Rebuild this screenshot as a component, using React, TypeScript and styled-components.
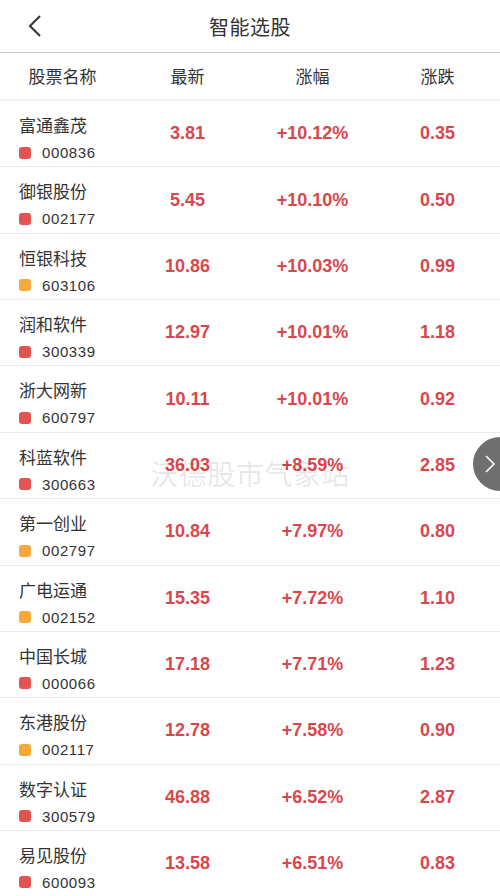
import { FunctionComponent } from "react";
import styled, { createGlobalStyle } from "styled-components";

const GlobalStyle = createGlobalStyle`
  body {
    margin: 0;
    background: #fff;
    font-family: "Noto Sans CJK SC", "Noto Sans", sans-serif;
    color: #333;
  }
`;

type Stock = {
    name: string;
    code: string;
    price: string;
    pct: string;
    change: string;
    level: "red" | "orange";
};

const stocks: Stock[] = [
    {name: "富通鑫茂", code: "000836", price: "3.81", pct: "+10.12%", change: "0.35", level: "red"},
    {name: "御银股份", code: "002177", price: "5.45", pct: "+10.10%", change: "0.50", level: "red"},
    {name: "恒银科技", code: "603106", price: "10.86", pct: "+10.03%", change: "0.99", level: "orange"},
    {name: "润和软件", code: "300339", price: "12.97", pct: "+10.01%", change: "1.18", level: "red"},
    {name: "浙大网新", code: "600797", price: "10.11", pct: "+10.01%", change: "0.92", level: "red"},
    {name: "科蓝软件", code: "300663", price: "36.03", pct: "+8.59%", change: "2.85", level: "red"},
    {name: "第一创业", code: "002797", price: "10.84", pct: "+7.97%", change: "0.80", level: "orange"},
    {name: "广电运通", code: "002152", price: "15.35", pct: "+7.72%", change: "1.10", level: "orange"},
    {name: "中国长城", code: "000066", price: "17.18", pct: "+7.71%", change: "1.23", level: "red"},
    {name: "东港股份", code: "002117", price: "12.78", pct: "+7.58%", change: "0.90", level: "orange"},
    {name: "数字认证", code: "300579", price: "46.88", pct: "+6.52%", change: "2.87", level: "red"},
    {name: "易见股份", code: "600093", price: "13.58", pct: "+6.51%", change: "0.83", level: "red"},
];

const Page = styled.div`
  position: relative;
  width: 500px;
  height: 896px;
  overflow: hidden;
  background: #fff;
`;

const NavBar = styled.div`
  position: relative;
  height: 53px;
  display: flex;
  align-items: center;
  justify-content: center;
  border-bottom: 1px solid #c9c9c9;
  box-sizing: border-box;
`;

const BackButton = styled.div`
  position: absolute;
  left: 26px;
  top: 14px;
  width: 18px;
  height: 24px;
  display: flex;
`;

const Title = styled.div`
  font-size: 20px;
  color: #333;
  letter-spacing: 0.5px;
`;

const Grid = styled.div`
  display: grid;
  grid-template-columns: repeat(4, 1fr);
  align-items: center;
  box-sizing: border-box;
`;

const HeaderRow = styled(Grid)`
  height: 48px;
  border-bottom: 2px solid #efefef;
`;

const HeadCell = styled.div`
  text-align: center;
  font-size: 17px;
  color: #333;
  padding-bottom: 1px;
`;

const Row = styled(Grid)`
  height: 66.36px;
  border-bottom: 1px solid #ececec;
`;

const NameCell = styled.div`
  align-self: start;
  padding: 12px 0 0 19px;
  display: flex;
  flex-direction: column;
  gap: 7px;
`;

const Name = styled.div`
  font-size: 17px;
  line-height: 24px;
  color: #333;
  white-space: nowrap;
`;

const CodeLine = styled.div`
  display: flex;
  align-items: center;
  gap: 11px;
  height: 17px;
`;

const Dot = styled.span<{ $level: "red" | "orange" }>`
  width: 12px;
  height: 12px;
  border-radius: 3px;
  background: ${p => p.$level === "red" ? "#e35352" : "#f7a83a"};
`;

const Code = styled.span`
  font-family: "Liberation Sans", "Noto Sans", sans-serif;
  font-size: 15px;
  color: #333;
  letter-spacing: 0.6px;
`;

const Num = styled.div`
  text-align: center;
  font-family: "Liberation Sans", "Noto Sans", sans-serif;
  font-weight: bold;
  font-size: 18px;
  color: #d9474d;
`;

const Watermark = styled.div`
  position: absolute;
  left: 0;
  right: 0;
  top: 453px;
  text-align: center;
  font-size: 28px;
  color: rgba(0, 0, 0, 0.1);
  pointer-events: none;
  letter-spacing: 0.5px;
`;

const SideButton = styled.div`
  position: absolute;
  left: 473px;
  top: 437px;
  width: 54px;
  height: 54px;
  border-radius: 50%;
  background: #6f6f6f;
  display: flex;
  align-items: center;
  padding-left: 11px;
  box-sizing: border-box;
`;

const App: FunctionComponent = () => (
    <Page>
        <GlobalStyle/>
        <NavBar>
            <BackButton>
                <svg width="18" height="24" viewBox="0 0 18 24">
                    <path d="M14 2 L4 12 L14 22" fill="none" stroke="#333" strokeWidth="2"/>
                </svg>
            </BackButton>
            <Title>智能选股</Title>
        </NavBar>
        <HeaderRow>
            <HeadCell>股票名称</HeadCell>
            <HeadCell>最新</HeadCell>
            <HeadCell>涨幅</HeadCell>
            <HeadCell>涨跌</HeadCell>
        </HeaderRow>
        {stocks.map(s => (
            <Row key={s.code}>
                <NameCell>
                    <Name>{s.name}</Name>
                    <CodeLine>
                        <Dot $level={s.level}/>
                        <Code>{s.code}</Code>
                    </CodeLine>
                </NameCell>
                <Num>{s.price}</Num>
                <Num>{s.pct}</Num>
                <Num>{s.change}</Num>
            </Row>
        ))}
        <Watermark>沃德股市气象站</Watermark>
        <SideButton>
            <svg width="12" height="20" viewBox="0 0 12 20">
                <path d="M2 2 L10 10 L2 18" fill="none" stroke="#fff" strokeWidth="1.6"/>
            </svg>
        </SideButton>
    </Page>
);

export default App;
